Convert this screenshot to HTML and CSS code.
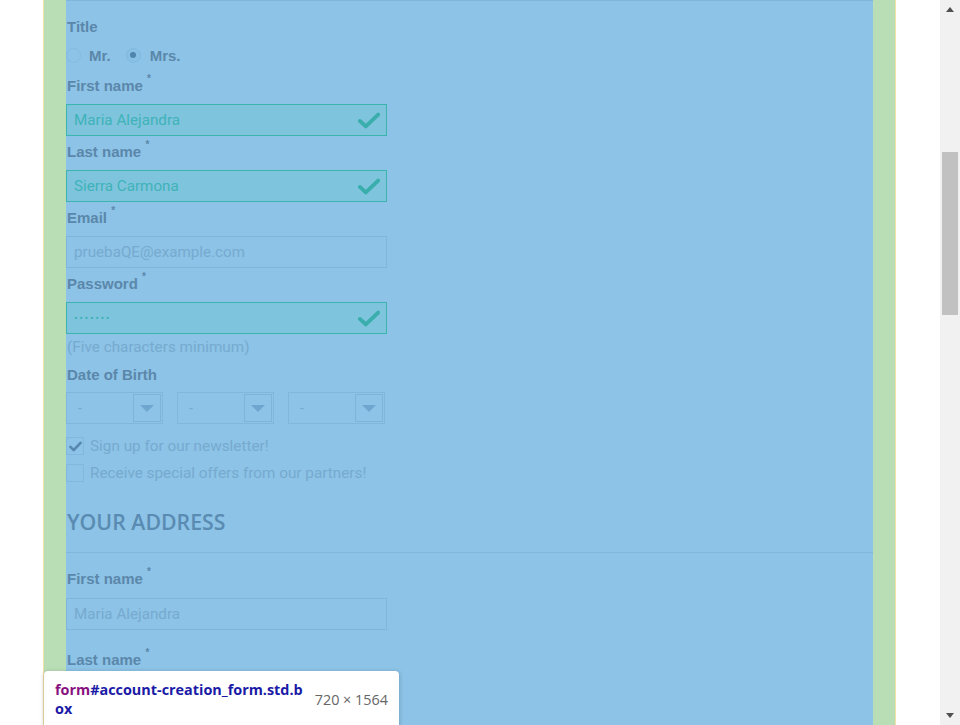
FILE: index.html
```html
<!DOCTYPE html>
<html>
<head>
<meta charset="utf-8">
<link rel="stylesheet" href="styles.css">
</head>
<body>
<div class="window">
  <div class="viewport">
    <div class="page">
      <form class="form">
        <div class="topline"></div>
        <div class="label first">Title</div>
        <div class="radios">
          <span class="radio"></span><span class="rlabel">Mr.</span>
          <span class="radio checked"></span><span class="rlabel">Mrs.</span>
        </div>
        <div class="label">First name <sup>*</sup></div>
        <div class="input valid"><span>Maria Alejandra</span><svg class="ok" viewBox="0 0 24 18"><path d="M2 9.5 L8.5 15.5 L22 2.5" fill="none" stroke="currentColor" stroke-width="4.2" stroke-linecap="round" stroke-linejoin="round"/></svg></div>
        <div class="label">Last name <sup>*</sup></div>
        <div class="input valid"><span>Sierra Carmona</span><svg class="ok" viewBox="0 0 24 18"><path d="M2 9.5 L8.5 15.5 L22 2.5" fill="none" stroke="currentColor" stroke-width="4.2" stroke-linecap="round" stroke-linejoin="round"/></svg></div>
        <div class="label">Email <sup>*</sup></div>
        <div class="input plain"><span>pruebaQE@example.com</span></div>
        <div class="label">Password <sup>*</sup></div>
        <div class="input valid"><span class="dots">•••••••</span><svg class="ok" viewBox="0 0 24 18"><path d="M2 9.5 L8.5 15.5 L22 2.5" fill="none" stroke="currentColor" stroke-width="4.2" stroke-linecap="round" stroke-linejoin="round"/></svg></div>
        <div class="help">(Five characters minimum)</div>
        <div class="label dob">Date of Birth</div>
        <div class="selects">
          <div class="select"><span>-</span><span class="arrow"></span></div>
          <div class="select"><span>-</span><span class="arrow"></span></div>
          <div class="select"><span>-</span><span class="arrow"></span></div>
        </div>
        <div class="check-row"><span class="box"><svg viewBox="0 0 14 12"><path d="M1.5 6.5 L5 10 L12.5 2" fill="none" stroke="currentColor" stroke-width="2.8" stroke-linecap="round" stroke-linejoin="round"/></svg></span><span>Sign up for our newsletter!</span></div>
        <div class="check-row second"><span class="box"></span><span>Receive special offers from our partners!</span></div>
        <h3 class="heading">YOUR ADDRESS</h3>
        <div class="label addr">First name <sup>*</sup></div>
        <div class="input plain"><span>Maria Alejandra</span></div>
        <div class="label addr2">Last name <sup>*</sup></div>
      </form>
    </div>
    <div class="tooltip">
      <div class="sel"><span class="tag">form</span><span class="id">#account-creation_form.std.b<br>ox</span></div>
      <div class="size">720 × 1564</div>
    </div>
  </div>
  <div class="scrollbar">
    <div class="sb-btn up"></div>
    <div class="sb-track"><div class="sb-thumb"></div></div>
    <div class="sb-btn down"></div>
  </div>
</div>
</body>
</html>
```
FILE: styles.css
```css
* { box-sizing: border-box; }
html, body { margin: 0; padding: 0; }
body { background: #fff; font-family: Roboto, "Liberation Sans", Arial, sans-serif; overflow: hidden; }
.window { display: flex; width: 960px; height: 725px; overflow: hidden; }
.viewport { position: relative; width: 940px; height: 725px; overflow: hidden; background: #fff; }
.page {
  margin-left: 43px; width: 853px; height: 725px;
  border-left: 1px solid #f2e2a8; border-right: 1px solid #f2e2a8;
  background: #b9ddb5; padding: 0 22px;
}
.form { display: block; background: #8cc3e6; height: 725px; margin: 0; }
.topline { height: 1px; background: #7fb6dc; }
.label { font-family: "Liberation Sans", Arial, sans-serif; font-size: 15px; font-weight: bold; color: #5b87ab; line-height: 22px; height: 20px; margin: 5px 0 9px 1px; }
.label.first { margin-top: 15px; margin-bottom: 9px; }
.label sup { font-size: 10px; vertical-align: top; line-height: 12px; position: relative; top: -2px; }
.radios { display: flex; align-items: center; height: 20px; margin-bottom: 10px; }
.radio { width: 15px; height: 15px; border-radius: 50%; border: 1px solid #84bbe0; margin-right: 8px; position: relative; flex: none; }
.radio.checked { border-color: #80b9df; background: #88c0e4; margin-right: 9px; }
.radio.checked::after { content: ""; position: absolute; left: 3.5px; top: 3.5px; width: 6px; height: 6px; border-radius: 50%; background: #4f84ad; }
.rlabel { font-family: "Liberation Sans", Arial, sans-serif; font-size: 15px; font-weight: bold; color: #5b87ab; margin-right: 15px; }
.input {
  width: 321px; height: 32px; display: flex; align-items: center; justify-content: space-between;
  padding: 0 6px 0 7px; font-size: 15.2px; border: 1px solid #7fb7da;
}
.input.valid { background: #7ec4dd; border-color: #3db3ae; color: #3fb3b8; }
.input.plain { color: #77aacf; }
.input .dots { font-size: 11px; letter-spacing: 1.6px; }
.ok { width: 22px; height: 17px; color: #39aeac; }
.help { font-size: 15.3px; color: #77aacf; line-height: 20px; margin: 3px 0 0 1px; height: 21px; }
.label.dob { margin-top: 6px; margin-bottom: 8px; }
.selects { display: flex; gap: 14px; }
.select {
  width: 97px; height: 32px; border: 1px solid #80b8dc; display: flex; justify-content: space-between; align-items: center;
  padding: 1px 1px 1px 11px; color: #77aacf; font-size: 14px;
}
.select .arrow { width: 28px; height: 28px; border: 1px solid #7db4d8; position: relative; }
.select .arrow::after { content: ""; position: absolute; left: 6px; top: 10px; border-left: 7px solid transparent; border-right: 7px solid transparent; border-top: 7px solid #6ea6cf; }
.check-row { display: flex; align-items: center; height: 20px; margin-top: 12px; font-size: 15.3px; color: #77aacf; }
.check-row.second { margin-top: 7px; }
.box { width: 18px; height: 18px; border: 1px solid #81b9dc; margin-right: 6px; display: flex; align-items: center; justify-content: center; color: #5887b0; flex: none; }
.box svg { width: 13px; height: 11px; }
.heading {
  font-family: "Open Sans", sans-serif; font-weight: 600; font-size: 21.3px; color: #5a8bb2;
  margin: 26px 0 0 0; padding: 0 0 17px 1px; line-height: 26px; border-bottom: 1px solid #80b8dc; letter-spacing: 0;
}
.label.addr { margin-top: 15px; margin-bottom: 10px; }
.label.addr2 { margin-top: 19px; }
.tooltip {
  position: absolute; left: 44px; top: 671px; width: 355px; height: 62px;
  background: #fff; border-radius: 4px; box-shadow: 0 1px 4px rgba(0,0,0,0.25);
  display: flex; justify-content: space-between; padding: 9px 11px 0 11px;
}
.tooltip .sel { font-family: "Open Sans", sans-serif; font-weight: bold; font-size: 14.4px; line-height: 19px; width: 255px; }
.tooltip .tag { color: #881280; }
.tooltip .id { color: #1a1aa6; }
.tooltip .size { font-family: "Open Sans", sans-serif; font-size: 14.4px; color: #666; padding-top: 10px; }
.scrollbar { width: 20px; height: 725px; background: #f1f1f1; display: flex; flex-direction: column; }
.sb-btn { height: 20px; position: relative; }
.sb-btn.up::after { content: ""; position: absolute; left: 6px; top: 7px; border-left: 4px solid transparent; border-right: 4px solid transparent; border-bottom: 5px solid #505050; }
.sb-btn.down::after { content: ""; position: absolute; left: 6px; top: 8px; border-left: 4px solid transparent; border-right: 4px solid transparent; border-top: 5px solid #505050; }
.sb-track { flex: 1; padding: 132px 2px 0 2px; }
.sb-thumb { height: 163px; background: #c1c1c1; }
```
